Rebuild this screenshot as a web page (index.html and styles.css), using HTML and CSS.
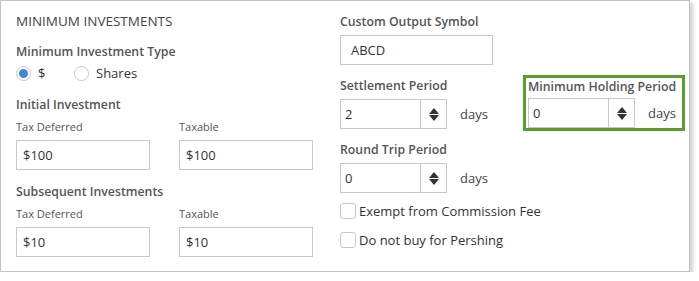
FILE: index.html
```html
<!DOCTYPE html>
<html lang="en">
<head>
    <meta charset="UTF-8">
    <title>Minimum Investments</title>
    <link rel="stylesheet" href="styles.css">
</head>
<body>
    <div class="panel">
        <div class="col col-left">
            <h3 class="section-title">MINIMUM INVESTMENTS</h3>

            <div class="label type-label">Minimum Investment Type</div>
            <div class="radios">
                <label class="radio"><span class="dot checked"></span>$</label>
                <label class="radio"><span class="dot"></span>Shares</label>
            </div>

            <div class="label group-label">Initial Investment</div>
            <div class="pair">
                <div class="field">
                    <div class="sublabel">Tax Deferred</div>
                    <div class="input">$100</div>
                </div>
                <div class="field">
                    <div class="sublabel">Taxable</div>
                    <div class="input">$100</div>
                </div>
            </div>

            <div class="label group-label">Subsequent Investments</div>
            <div class="pair">
                <div class="field">
                    <div class="sublabel">Tax Deferred</div>
                    <div class="input">$10</div>
                </div>
                <div class="field">
                    <div class="sublabel">Taxable</div>
                    <div class="input">$10</div>
                </div>
            </div>
        </div>

        <div class="col col-right">
            <div class="label">Custom Output Symbol</div>
            <div class="input symbol">ABCD</div>

            <div class="period-row">
                <div class="period settlement">
                    <div class="label">Settlement Period</div>
                    <div class="spin-line">
                        <div class="spinner">
                            <div class="spin-value">2</div>
                            <div class="spin-btn"><span class="up"></span><span class="down"></span></div>
                        </div>
                        <span class="unit">days</span>
                    </div>
                </div>
                <div class="period highlight">
                    <div class="label">Minimum Holding Period</div>
                    <div class="spin-line">
                        <div class="spinner">
                            <div class="spin-value">0</div>
                            <div class="spin-btn"><span class="up"></span><span class="down"></span></div>
                        </div>
                        <span class="unit">days</span>
                    </div>
                </div>
            </div>

            <div class="period round-trip">
                <div class="label">Round Trip Period</div>
                <div class="spin-line">
                    <div class="spinner">
                        <div class="spin-value">0</div>
                        <div class="spin-btn"><span class="up"></span><span class="down"></span></div>
                    </div>
                    <span class="unit">days</span>
                </div>
            </div>

            <label class="check"><span class="box"></span>Exempt from Commission Fee</label>
            <label class="check"><span class="box"></span>Do not buy for Pershing</label>
        </div>
    </div>
</body>
</html>
```

FILE: styles.css
```css
body {
    margin: 0;
    background: #fff;
    font-family: 'Open Sans', sans-serif;
    color: #333;
}
.panel {
    display: flex;
    box-sizing: border-box;
    width: 690px;
    height: 272px;
    border: 1px solid #c2c2c2;
    box-shadow: 3px 3px 4px rgba(0, 0, 0, 0.18);
    padding: 0 0 0 15px;
}
.col-left {
    width: 324px;
}
.col-right {
    padding-top: 11px;
}

/* left column */
.section-title {
    margin: 10px 0 0;
    font-size: 13.5px;
    font-weight: 400;
    color: #444;
    line-height: 20px;
}
.label {
    font-size: 12.3px;
    font-weight: 600;
    color: #555;
    line-height: 20px;
}
.type-label {
    margin-top: 11px;
}
.group-label {
    margin-top: 13px;
}
.pair + .group-label {
    margin-top: 12px;
}
.radios {
    display: flex;
    margin-top: 2px;
}
.radio {
    display: flex;
    align-items: center;
    font-size: 13px;
    color: #333;
    width: 58px;
    height: 18px;
    white-space: nowrap;
}
.dot {
    position: relative;
    flex-shrink: 0;
    width: 13px;
    height: 13px;
    border: 1px solid #c6c6c6;
    border-radius: 50%;
    margin-right: 7px;
}
.dot.checked::after {
    content: '';
    position: absolute;
    left: 2px;
    top: 2px;
    width: 9px;
    height: 9px;
    border-radius: 50%;
    background: #3a8ad8;
}
.pair {
    display: flex;
    gap: 29px;
    margin-top: 4px;
}
.sublabel {
    font-size: 11px;
    color: #555;
    line-height: 16px;
    margin-bottom: 5px;
}
.input {
    box-sizing: border-box;
    width: 134px;
    height: 30px;
    border: 1px solid #c8c8c8;
    padding: 0 6px;
    font-size: 13px;
    line-height: 28px;
    color: #333;
}

/* right column */
.symbol {
    width: 153px;
    margin-top: 3px;
    padding-left: 10px;
}
.period-row {
    display: flex;
    align-items: flex-start;
}
.period {
    margin-top: 11px;
}
.settlement {
    width: 183px;
}
.period.highlight {
    margin-top: 10px;
    border: 3px solid #5b9e30;
    padding: 0 6px 0 2px;
}
.highlight .label {
    line-height: 18px;
}
.round-trip {
    margin-top: 9px;
}
.spin-line {
    display: flex;
    align-items: center;
    margin-top: 3px;
}
.highlight .spin-line {
    margin-top: 2px;
}
.spinner {
    display: flex;
    box-sizing: border-box;
    width: 107px;
    height: 30px;
    border: 1px solid #c8c8c8;
}
.spin-value {
    flex: 1;
    padding: 0 4px;
    font-size: 13px;
    line-height: 28px;
    border-right: 1px solid #c8c8c8;
}
.spin-btn {
    width: 25px;
    display: flex;
    flex-direction: column;
    align-items: center;
    justify-content: center;
    gap: 1px;
}
.up, .down {
    width: 0;
    height: 0;
    border-left: 5px solid transparent;
    border-right: 5px solid transparent;
}
.up {
    border-bottom: 6px solid #333;
}
.down {
    border-top: 6px solid #333;
}
.unit {
    font-size: 13px;
    color: #444;
    margin-left: 13px;
}
.check {
    display: flex;
    align-items: center;
    font-size: 13px;
    color: #333;
    margin-top: 9px;
    height: 18px;
}
.check + .check {
    margin-top: 11px;
}
.box {
    flex-shrink: 0;
    width: 14px;
    height: 14px;
    border: 1px solid #c8c8c8;
    border-radius: 3px;
    margin-right: 3px;
}
```
